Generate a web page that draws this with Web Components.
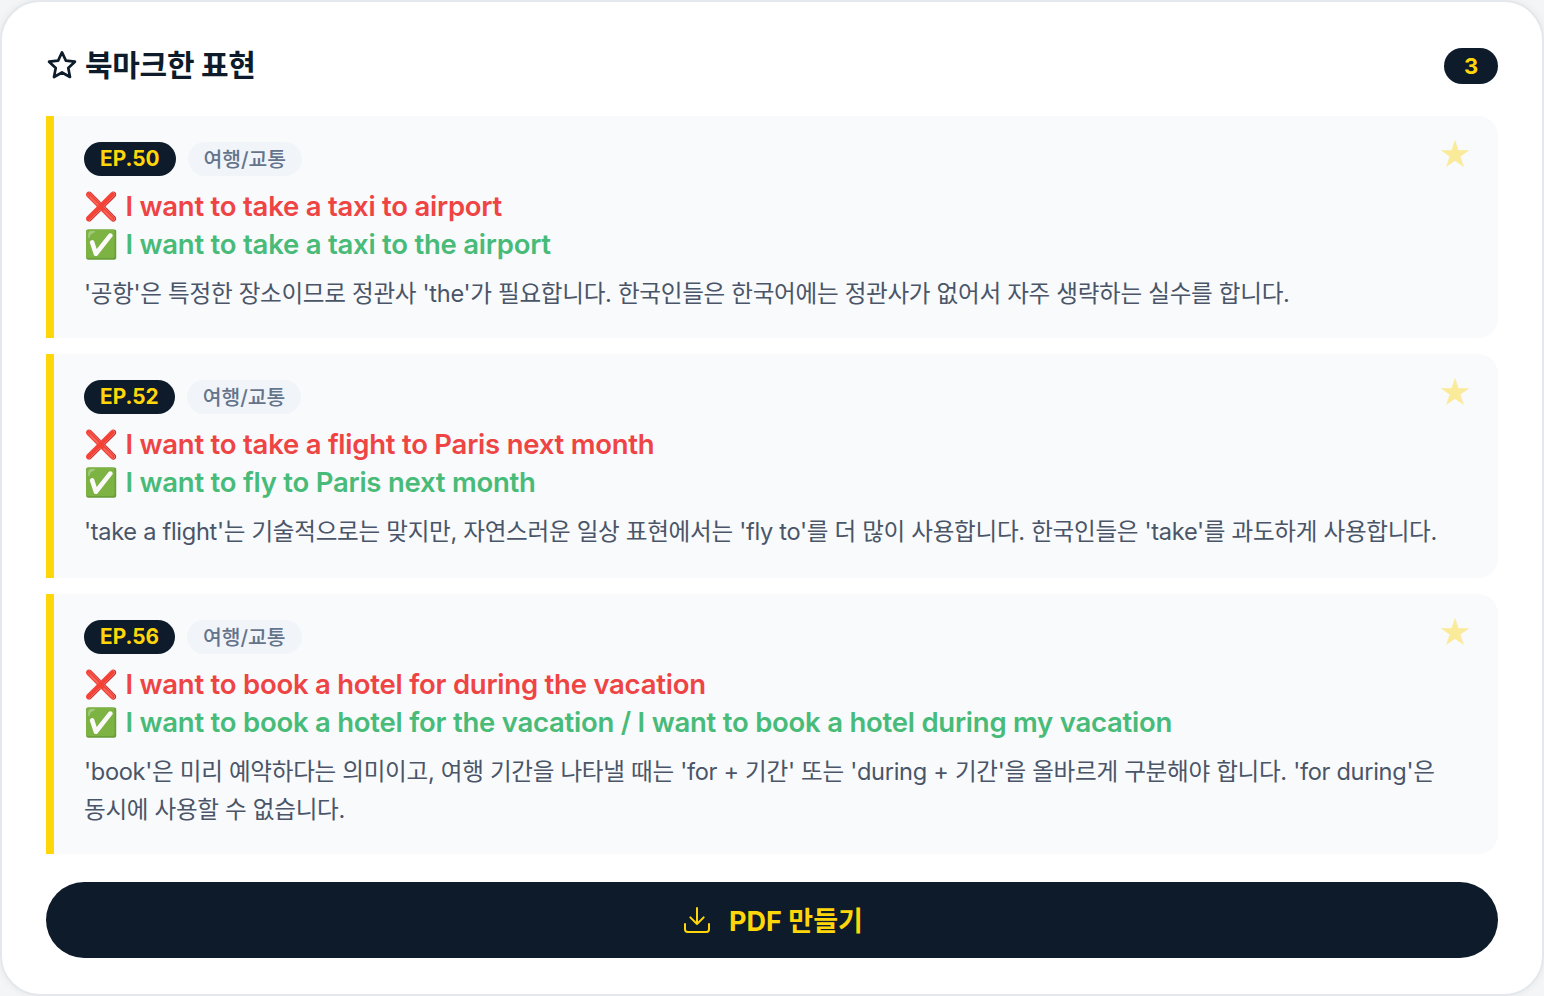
<!DOCTYPE html>
<html lang="ko">
<head>
<meta charset="utf-8">
<title>북마크한 표현</title>
<style>
  html, body { margin: 0; height: 100%; background: #f3f5f7; }
  body { font-family: Inter, "Noto Sans CJK KR", sans-serif; }
</style>
</head>
<body>
<bookmark-panel count="3">
  <bookmark-item ep="50" tag="여행/교통"
    wrong="I want to take a taxi to airport"
    right="I want to take a taxi to the airport">'공항'은 특정한 장소이므로 정관사 'the'가 필요합니다. 한국인들은 한국어에는 정관사가 없어서 자주 생략하는 실수를 합니다.</bookmark-item>
  <bookmark-item ep="52" tag="여행/교통" style="padding-bottom: 27px"
    wrong="I want to take a flight to Paris next month"
    right="I want to fly to Paris next month">'take a flight'는 기술적으로는 맞지만, 자연스러운 일상 표현에서는 'fly to'를 더 많이 사용합니다. 한국인들은 'take'를 과도하게 사용합니다.</bookmark-item>
  <bookmark-item ep="56" tag="여행/교통"
    wrong="I want to book a hotel for during the vacation"
    right="I want to book a hotel for the vacation / I want to book a hotel during my vacation">'book'은 미리 예약하다는 의미이고, 여행 기간을 나타낼 때는 'for + 기간' 또는 'during + 기간'을 올바르게 구분해야 합니다. 'for during'은 동시에 사용할 수 없습니다.</bookmark-item>
</bookmark-panel>

<script>
class BookmarkPanel extends HTMLElement {
  connectedCallback() {
    this.attachShadow({ mode: 'open' });
    this.shadowRoot.innerHTML = `
      <style>
        :host {
          display: block;
          box-sizing: border-box;
          height: 996px;
          background: #fff;
          border: 2px solid #e4e8ec;
          border-radius: 40px;
          padding: 44px 44px 36px;
          color: #0d1b2a;
          box-shadow: 0 0 8px rgba(0, 0, 0, .06);
        }
        .head {
          display: flex;
          align-items: center;
          justify-content: space-between;
          height: 40px;
          margin-bottom: 30px;
        }
        h2 {
          margin: 0 0 3px;
          display: flex;
          align-items: center;
          gap: 7px;
          font-size: 30px;
          font-weight: 700;
          letter-spacing: -0.3px;
          line-height: 36px;
        }
        h2 svg { width: 32px; height: 32px; display: block; }
        .count {
          box-sizing: border-box;
          width: 54px;
          height: 36px;
          border-radius: 18px;
          background: #0d1b2a;
          color: #ffd60a;
          font-size: 22px;
          font-weight: 700;
          display: flex;
          align-items: center;
          justify-content: center;
        }
        .list { display: flex; flex-direction: column; gap: 16px; }
        button {
          width: 100%;
          height: 76px;
          margin-top: 28px;
          border: 0;
          border-radius: 38px;
          background: #0d1b2a;
          color: #ffd60a;
          font: 700 27px Inter, "Noto Sans CJK KR", sans-serif;
          display: flex;
          align-items: center;
          justify-content: center;
          gap: 16px;
        }
        button svg { width: 32px; height: 32px; display: block; }
        button span { margin-bottom: 2px; }
      </style>
      <div class="head">
        <h2>
          <svg viewBox="0 0 24 24" fill="none" stroke="#0d1b2a" stroke-width="2" stroke-linejoin="round">
            <path d="M12 2.5l2.9 6.2 6.8.8-5 4.7 1.3 6.8-6-3.4-6 3.4 1.3-6.8-5-4.7 6.8-.8z"/>
          </svg>
          북마크한 표현
        </h2>
        <span class="count">${this.getAttribute('count')}</span>
      </div>
      <div class="list"><slot></slot></div>
      <button>
        <svg viewBox="0 0 24 24" fill="none" stroke="#ffd60a" stroke-width="1.5" stroke-linecap="round" stroke-linejoin="round">
          <path d="M3 15v4a2 2 0 0 0 2 2h14a2 2 0 0 0 2-2v-4M7 10l5 5 5-5M12 15V3"/>
        </svg>
        <span>PDF 만들기</span>
      </button>
    `;
  }
}

class BookmarkItem extends HTMLElement {
  connectedCallback() {
    this.attachShadow({ mode: 'open' });
    this.shadowRoot.innerHTML = `
      <style>
        :host {
          display: block;
          position: relative;
          box-sizing: border-box;
          background: #f8fafc;
          border-left: 8px solid #ffd60a;
          border-radius: 0 20px 20px 0;
          padding: 26px 30px 25px 30px;
        }
        .tags { display: flex; gap: 12px; height: 34px; margin-bottom: 11px; }
        .tags span {
          display: flex;
          align-items: center;
          padding: 0 16px 2px;
          border-radius: 17px;
        }
        .ep { background: #0d1b2a; color: #ffd60a; font-weight: 700; font-size: 20.8px; }
        .cat { background: #f1f5f9; color: #64748b; font-weight: 500; font-size: 20.4px; }
        .line { font-size: 27.5px; letter-spacing: -0.24px; font-weight: 600; line-height: 38px; }
        .line i { font-style: normal; margin-right: 1px; }
        .wrong { color: #ef4444; }
        .right { color: #48bb78; }
        .note { margin-top: 12px; font-size: 23.6px; letter-spacing: -0.3px; line-height: 38px; color: #4a5568; word-break: keep-all; }
        .star { position: absolute; top: 23px; right: 25.5px; font-size: 33px; line-height: 1; color: #ffd60a; opacity: .4; }
      </style>
      <span class="star">★</span>
      <div class="tags">
        <span class="ep">EP.${this.getAttribute('ep')}</span>
        <span class="cat">${this.getAttribute('tag')}</span>
      </div>
      <div class="line wrong"><i>❌</i> ${this.getAttribute('wrong')}</div>
      <div class="line right"><i>✅</i> ${this.getAttribute('right')}</div>
      <div class="note"><slot></slot></div>
    `;
  }
}

customElements.define('bookmark-panel', BookmarkPanel);
customElements.define('bookmark-item', BookmarkItem);
</script>
</body>
</html>
